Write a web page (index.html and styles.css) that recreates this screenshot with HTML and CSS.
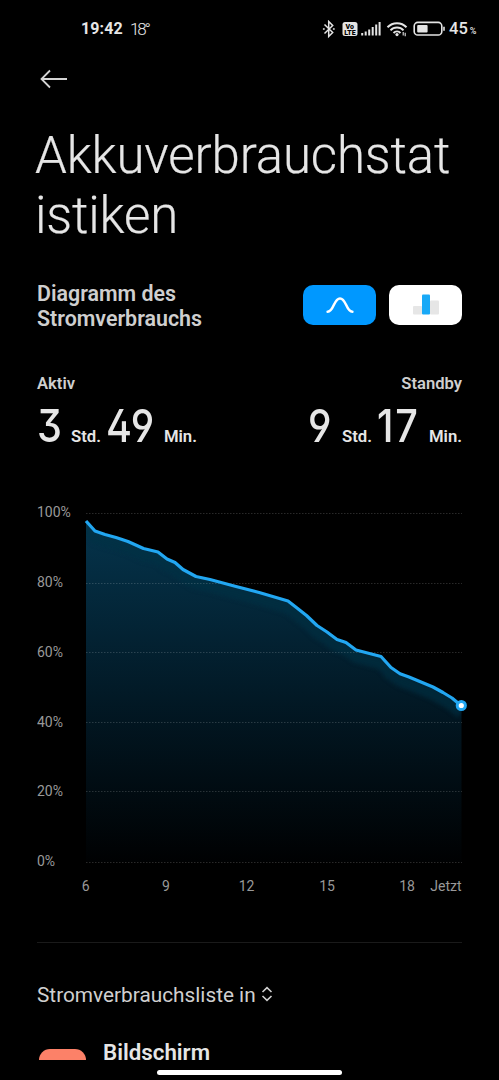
FILE: index.html
```
<!DOCTYPE html>
<html lang="de">
<head>
  <meta charset="UTF-8">
  <title>Akkuverbrauchstatistiken</title>
  <meta name="viewport" content="width=device-width, initial-scale=1.0">
  <link rel="stylesheet" href="styles.css">
</head>
<body>
  <div class="screen">
    <div class="status-bar">
      <span class="clock">19:42</span>
      <span class="temp">18°</span>
      <svg class="status-icons" width="124" height="20" viewBox="0 0 124 20" fill="none" stroke="#e4e4e4">
        <!-- Bluetooth -->
        <path d="M2.5 4.5 L10.7 12.5 L6.7 16.5 V1.5 L10.7 5.5 L2.5 13.5" stroke-width="1.5"/>
        <path d="M.9 9h1.8M10.9 9h1.8" stroke-width="1.6"/>
        <!-- VoLTE -->
        <rect x="20.5" y="2" width="15" height="14" rx="2.5" fill="#e4e4e4" stroke="none"/>
        <text class="volte" x="27.8" y="8.6">Vo</text>
        <text class="volte" x="28" y="14.8">LTE</text>
        <!-- Signal -->
        <path d="M40.2 13v2.5M43.7 11.5v4M47.2 9.5v6M50.7 7v8.5M54.2 4.5v11M57.6 2v13.5" stroke-width="2"/>
        <!-- WLAN -->
        <path d="M65.5 7.3a13 13 0 0 1 19 0M68.5 10.4a9 9 0 0 1 13 0M71.5 13a5 5 0 0 1 7 0" stroke-width="2"/>
        <circle cx="75" cy="14.6" r="1.6" fill="#e4e4e4" stroke="none"/>
        <path d="M81.2 12v3.5M83.2 12.8v3.5" stroke-width="1.1"/>
        <!-- Akku -->
        <rect x="92.2" y="2.4" width="27.6" height="12.6" rx="3.6" stroke-width="1.6"/>
        <rect x="95.2" y="5" width="10.4" height="7.4" rx="1" fill="#e4e4e4" stroke="none"/>
        <path d="M122 6.8v4" stroke-width="1.6"/>
      </svg>
      <span class="percent">45<small>%</small></span>
    </div>

    <div class="back">
      <svg width="28" height="20" viewBox="0 0 28 20" fill="none" stroke="#d4d4d4" stroke-width="1.8">
        <path d="M10 1.5 L1.5 10 L10 18.5M1.5 10H27"/>
      </svg>
    </div>

    <h1>Akkuverbrauchstat<br>istiken</h1>

    <div class="diagram-head">
      <h2>Diagramm des<br>Stromverbrauchs</h2>
      <div class="toggle active">
        <svg width="28" height="18" viewBox="0 0 28 18" fill="none" stroke="#fff" stroke-width="2.5" stroke-linecap="round">
          <path d="M1.6 15.8C8 15.8 7.6 2.4 14 2.4S20 15.8 26.4 15.8"/>
        </svg>
      </div>
      <div class="toggle">
        <svg width="26" height="21" viewBox="0 0 26 21">
          <rect x="0" y="12" width="9" height="8.5" rx="1" fill="#e6e6e6"/>
          <rect x="17" y="6.5" width="9" height="14" rx="1" fill="#e6e6e6"/>
          <rect x="9" y="0.5" width="8" height="20" rx="1" fill="#19a9f7"/>
        </svg>
      </div>
    </div>

    <div class="times">
      <div class="time">
        <div class="label">Aktiv</div>
        <div class="value"><b class="d1">3</b><span>Std.</span><b class="d2">49</b><span>Min.</span></div>
      </div>
      <div class="time right">
        <div class="label">Standby</div>
        <div class="value"><b class="d1">9</b><span>Std.</span><b class="d2 narrow">17</b><span>Min.</span></div>
      </div>
    </div>

    <svg class="chart" width="435" height="400" viewBox="0 0 435 400">
      <defs>
        <linearGradient id="fill" x1="0" y1="8" x2="0" y2="349" gradientUnits="userSpaceOnUse">
          <stop offset="0" stop-color="#05344c"/>
          <stop offset="0.5" stop-color="#021a27"/>
          <stop offset="1" stop-color="#000102"/>
        </linearGradient>
        <clipPath id="area">
          <path d="M0 8 9 18 19 21.5 30 24.5 42 28.5 57.5 35.5 72 39 81 46 89 49.5 97 56.5 110 63.5 124 66.5 150 73.5 174 79.7 202 88 211 95 220.5 102.5 231 112.5 241 119 251 126.5 260 129.5 270 137 295 143.5 305 154.5 314 160.7 323 164 347 174 357 179.5 366 185 375.5 193V349H0Z"/>
        </clipPath>
        <filter id="soft" x="-5%" y="-10%" width="110%" height="120%">
          <feGaussianBlur stdDeviation="2"/>
        </filter>
      </defs>
      <g class="axis">
        <text x="0" y="17">100%</text>
        <text x="0" y="87">80%</text>
        <text x="0" y="156.7">60%</text>
        <text x="0" y="226.5">40%</text>
        <text x="0" y="296">20%</text>
        <text x="0" y="365.7">0%</text>
      </g>
      <g class="axis hours">
        <text x="48.8" y="390.5">6</text>
        <text x="129" y="390.5">9</text>
        <text x="209.5" y="390.5">12</text>
        <text x="290" y="390.5">15</text>
        <text x="370" y="390.5">18</text>
        <text x="409" y="390.5">Jetzt</text>
      </g>
      <g transform="translate(49 13)">
        <g clip-path="url(#area)">
          <rect width="376" height="349" fill="url(#fill)"/>
          <!-- Schatten unter der Linie -->
          <path class="shadow" filter="url(#soft)" d="M0 15 9 25 19 28.5 30 31.5 42 35.5 57.5 42.5 72 46 81 53 89 56.5 97 63.5 110 70.5 124 73.5 150 80.5 174 86.7 202 95 211 102 220.5 109.5 231 119.5 241 126 251 133.5 260 136.5 270 144 295 150.5 305 161.5 314 167.7 323 171 347 181 357 186.5 366 192 375.5 200"/>
        </g>
        <path class="grid" d="M0 .5H376M0 70.5H376M0 139.5H376M0 209.5H376M0 278.5H376M0 349.5H376"/>
        <path class="line" d="M0 8 9 18 19 21.5 30 24.5 42 28.5 57.5 35.5 72 39 81 46 89 49.5 97 56.5 110 63.5 124 66.5 150 73.5 174 79.7 202 88 211 95 220.5 102.5 231 112.5 241 119 251 126.5 260 129.5 270 137 295 143.5 305 154.5 314 160.7 323 164 347 174 357 179.5 366 185 375.5 193"/>
        <circle cx="375.3" cy="192.5" r="4.1" fill="#fff" stroke="#22a7f2" stroke-width="3"/>
      </g>
    </svg>

    <div class="list-head">
      <span>Stromverbrauchsliste in</span>
      <svg width="12" height="16" viewBox="0 0 12 16" fill="none" stroke="#d0d0d0" stroke-width="1.6">
        <path d="M1.5 6 6 1.7 10.5 6M1.5 10 6 14.3 10.5 10"/>
      </svg>
    </div>

    <div class="list-item">
      <div class="app-icon"></div>
      <div class="app-name">Bildschirm</div>
    </div>
    <div class="home-bar"></div>
  </div>
</body>
</html>
```
FILE: styles.css
```
* {
  box-sizing: border-box;
}
body {
  margin: 0;
  background: #000;
  color: #e6e6e6;
  font-family: Roboto, "Liberation Sans", sans-serif;
}
.screen {
  height: 1080px;
  padding: 0 37px;
  overflow: hidden;
}
h1, h2 {
  margin: 0;
}
.status-bar {
  display: flex;
  height: 38px;
  margin-right: -15px;
  padding: 20px 0 0 44px;
  line-height: 18px;
}
.clock {
  width: 49px;
  font-size: 16px;
  font-weight: 700;
  letter-spacing: 0.1px;
}
.temp {
  font-size: 17px;
  font-weight: 300;
  letter-spacing: -2.2px;
}
.status-icons {
  margin-left: auto;
}
.volte {
  fill: #000;
  stroke: none;
  font-size: 7px;
  font-weight: 900;
  text-anchor: middle;
}
.percent {
  width: 28px;
  margin-left: 3px;
  font-size: 16.5px;
  font-weight: 500;
  white-space: nowrap;
}
.percent small {
  margin-left: 2px;
  font-size: 9px;
}
.back {
  height: 88px;
  padding: 31px 0 0 3px;
}
h1 {
  height: 120px;
  margin-left: -2px;
  font-size: 51px;
  font-weight: 300;
  line-height: 60px;
  letter-spacing: -0.15px;
  -webkit-text-stroke: 0.2px #e6e6e6;
  white-space: nowrap;
}
.diagram-head {
  display: flex;
  height: 41px;
  margin-top: 38px;
  align-items: center;
  gap: 13px;
}
h2 {
  flex: 1;
  padding-top: 2px;
  color: #cfcfcf;
  font-size: 21.4px;
  font-weight: 600;
  line-height: 25px;
}
.toggle {
  display: flex;
  width: 73px;
  height: 40px;
  align-items: center;
  justify-content: center;
  border-radius: 10px;
  background: #fff;
}
.toggle.active {
  background: #0098ff;
}
.times {
  display: flex;
  justify-content: space-between;
  height: 175px;
  padding-top: 49px;
}
.right .label {
  text-align: right;
}
.label {
  color: #cfcfcf;
  font-size: 16.6px;
  font-weight: 600;
  line-height: 20px;
}
.value {
  display: flex;
  align-items: baseline;
  height: 50px;
  margin-top: 7px;
  line-height: 50px;
}
.value b {
  font-family: Inter, Roboto, sans-serif;
  font-size: 45px;
  font-weight: 500;
  font-feature-settings: "cv09", "cv04", "ss01";
  transform: scaleX(0.88);
  transform-origin: left;
}
.value span {
  font-size: 16.7px;
  font-weight: 600;
}
.d1 {
  width: 34px;
}
.d2 {
  width: 58px;
  margin-left: 5px;
  letter-spacing: 0.5px;
}
.narrow {
  width: 52px;
  letter-spacing: 2px;
}
.chart {
  display: block;
}
.axis {
  fill: #999;
  font-size: 14px;
}
.hours {
  text-anchor: middle;
}
.grid {
  stroke: rgba(255, 255, 255, 0.16);
  stroke-dasharray: 1.5 1.5;
}
.shadow {
  fill: none;
  stroke: #063044;
  stroke-width: 12;
  opacity: 0.6;
}
.line {
  fill: none;
  stroke: #22a7f2;
  stroke-width: 3.2;
  stroke-linejoin: round;
}
.list-head {
  display: flex;
  height: 91px;
  margin-top: 42px;
  padding-top: 40px;
  gap: 5px;
  border-top: 1px solid #1a1a1a;
  color: #d0d0d0;
  font-size: 20.8px;
  line-height: 24px;
}
.list-head svg {
  margin-top: 3px;
}
.list-item {
  display: flex;
  height: 27px;
  padding-left: 2px;
  gap: 17px;
}
.app-icon {
  width: 47px;
  height: 11px;
  margin-top: 16px;
  border-radius: 12px 12px 0 0;
  background: #fc8168;
}
.app-name {
  padding-top: 7px;
  font-size: 22.3px;
  font-weight: 600;
  line-height: 24px;
}
.home-bar {
  width: 185px;
  height: 5px;
  margin: 10px auto 0;
  border-radius: 3px;
  background: #fff;
}
```
